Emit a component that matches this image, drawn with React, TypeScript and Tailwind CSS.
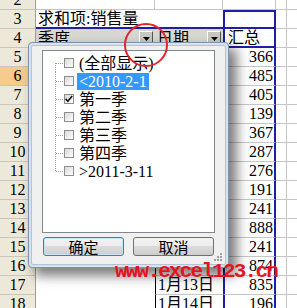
import React from "react";

const ROWS = [2, 3, 4, 5, 6, 7, 8, 9, 10, 11, 12, 13, 14, 15, 16, 17, 18];
const VALUES: Record<number, string> = {
  5: "366", 6: "485", 7: "405", 8: "139", 9: "367", 10: "287", 11: "276",
  12: "191", 13: "241", 14: "888", 15: "241", 16: "874", 17: "835", 18: "196",
};
const DATES: Record<number, string> = { 17: "1月13日", 18: "1月14日" };

const F = "font-['Liberation_Serif','Noto_Sans_CJK_SC',serif] text-[16px] leading-[16px] text-black";

function DropBtn() {
  return (
    <div className="mr-[2px] mt-[2px] flex h-[13px] w-[14px] shrink-0 items-end justify-center self-start border border-t-[#FFFFFF] border-l-[#FFFFFF] border-b-[#555555] border-r-[#555555] bg-[#C9C7C2] pb-[2px]">
      <svg width="7" height="4" viewBox="0 0 7 4">
        <path d="M0 0 H7 L3.5 4 Z" fill="#000" />
      </svg>
    </div>
  );
}

function Row({ n }: { n: number }) {
  const header = (
    <div
      className={`flex w-[36px] shrink-0 items-center justify-center border-r border-b border-r-[#A09D8F] border-b-[#C9C6B7] ${F} ${
        n === 6 ? "bg-[#F6CB8E]" : "bg-[#ECE9DA]"
      }`}
    >
      {n}
    </div>
  );

  let colA: React.ReactNode;
  let colB: React.ReactNode;
  let colC: React.ReactNode;

  if (n === 2) {
    colA = <div className="w-[119px] shrink-0 border-r border-b border-[#C6C6C6]" />;
    colB = <div className="w-[68px] shrink-0 border-r border-b border-[#C6C6C6]" />;
    colC = <div className="w-[53px] shrink-0 border-r border-b border-[#C6C6C6]" />;
  } else if (n === 3) {
    colA = (
      <div className={`flex w-[119px] shrink-0 items-center overflow-visible whitespace-nowrap border-b-2 border-b-[#1E1EA6] pl-[2px] ${F}`}>
        求和项:销售量
      </div>
    );
    colB = <div className="w-[68px] shrink-0 border-b-2 border-b-[#1E1EA6]" />;
    colC = <div className="w-[53px] shrink-0 border-2 border-[#1E1EA6]" />;
  } else if (n === 4) {
    colA = (
      <div className={`flex w-[119px] shrink-0 items-center justify-between bg-[#D9D7D1] pl-[2px] ${F}`}>
        <span>季度</span>
        <DropBtn />
      </div>
    );
    colB = (
      <div className={`flex w-[68px] shrink-0 items-center justify-between bg-[#D9D7D1] pl-[2px] ${F}`}>
        <span>日期</span>
        <DropBtn />
      </div>
    );
    colC = (
      <div className={`flex w-[53px] shrink-0 items-center border-x-2 border-b-2 border-[#1E1EA6] pl-[3px] ${F}`}>
        汇总
      </div>
    );
  } else {
    colA = <div className="w-[119px] shrink-0" />;
    colB = (
      <div className={`flex w-[68px] shrink-0 items-center border-l border-b border-l-[#000000] border-b-[#C6C6C6] pl-[2px] ${F}`}>
        {DATES[n] ?? ""}
      </div>
    );
    colC = (
      <div className={`flex w-[53px] shrink-0 items-center justify-end border-x-2 border-x-[#1E1EA6] border-b border-b-[#C6C6C6] pr-[1px] ${F}`}>
        {VALUES[n]}
      </div>
    );
  }

  return (
    <div className="flex h-[19px]">
      {header}
      {colA}
      {colB}
      {colC}
      <div className="w-[11px] shrink-0 border-r border-b border-[#C6C6C6]" />
      <div className="flex-1 border-b border-[#C6C6C6]" />
    </div>
  );
}

const ITEMS = ["(全部显示)", "<2010-2-1", "第一季", "第二季", "第三季", "第四季", ">2011-3-11"];

function Item({ i, text }: { i: number; text: string }) {
  const first = i === 0;
  const last = i === ITEMS.length - 1;
  const checked = i === 2;
  const selected = i === 1;
  return (
    <div className="flex h-[18px] items-center">
      <svg width="21" height="18" className="shrink-0">
        <line x1="12.5" y1={first ? 9 : 0} x2="12.5" y2={last ? 10 : 18} stroke="#9A9A9A" strokeDasharray="1 1" />
        <line x1="13" y1="9.5" x2="21" y2="9.5" stroke="#9A9A9A" strokeDasharray="1 1" />
      </svg>
      <div className="relative h-[10px] w-[10px] shrink-0 border border-[#8E8F8F] bg-[linear-gradient(135deg,#D8D8D8,#FFFFFF)]">
        {checked && (
          <svg width="10" height="10" viewBox="0 0 10 10" className="absolute left-[-1px] top-[-1px]">
            <path d="M1.6 4.8 L3.8 7.2 L8.2 2" stroke="#1A1A1A" strokeWidth="1.7" fill="none" />
          </svg>
        )}
      </div>
      <span
        className={`ml-[3px] h-[17px] whitespace-nowrap px-[2px] pt-[1px] font-['Liberation_Serif','Noto_Sans_CJK_SC',serif] text-[16px] leading-[16px] ${
          selected ? "bg-[#3399FF] text-white" : "text-black"
        }`}
      >
        {text}
      </span>
    </div>
  );
}

function Dialog() {
  const btn =
    "flex h-[19px] w-[81px] items-center justify-center rounded-[3px] border bg-[linear-gradient(to_bottom,#F4F4F4_0%,#EBEBEB_50%,#DCDCDC_50%,#CDCDCD_100%)] font-['Noto_Sans_CJK_SC',sans-serif] text-[15px] leading-[15px] text-black";
  return (
    <div className="absolute left-[28px] top-[42px] h-[226px] w-[201px] rounded-[4px] border border-[#7F93AE] bg-[#D5E3F2] p-[2px] shadow-[7px_7px_12px_1px_rgba(0,0,0,0.5)]">
      <div className="relative flex h-full flex-col rounded-[2px] border border-[#B2C3D6] bg-[#F0F0F0] px-[10px] pt-[4px] pb-[8px]">
        <div className="h-[183px] shrink-0 border border-[#828790] bg-white pt-[3px]">
          {ITEMS.map((t, i) => (
            <Item key={i} i={i} text={t} />
          ))}
        </div>
        <div className="mt-[4px] flex justify-between px-[1px]">
          <div className={`${btn} border-[#3C7FB1] shadow-[inset_0_0_0_1px_#C4E5F6]`}>确定</div>
          <div className={`${btn} border-[#707070]`}>取消</div>
        </div>
        <svg width="10" height="10" viewBox="0 0 10 10" className="absolute bottom-[2px] right-[2px]">
          <rect x="7" y="7" width="2" height="2" fill="#A0A0A0" />
          <rect x="4" y="7" width="2" height="2" fill="#A0A0A0" />
          <rect x="7" y="4" width="2" height="2" fill="#A0A0A0" />
          <rect x="1" y="7" width="2" height="2" fill="#A0A0A0" />
          <rect x="4" y="4" width="2" height="2" fill="#A0A0A0" />
          <rect x="7" y="1" width="2" height="2" fill="#A0A0A0" />
        </svg>
      </div>
    </div>
  );
}

export default function App() {
  return (
    <div className="relative h-[308px] w-[297px] overflow-hidden bg-white">
      <div className="mt-[-9px] flex flex-col">
        {ROWS.map((n) => (
          <Row key={n} n={n} />
        ))}
      </div>
      <Dialog />
      <div className="absolute left-[115px] top-[262px] whitespace-nowrap font-['Liberation_Mono',monospace] text-[21px] font-bold leading-[20px] tracking-[-1.8px] text-[#E4161C]">
        www.excel123.cn
      </div>
      <svg width="46" height="46" className="absolute left-[123px] top-[22px]">
        <circle cx="23" cy="23" r="21" stroke="#E0262B" strokeWidth="2" fill="none" />
      </svg>
    </div>
  );
}
